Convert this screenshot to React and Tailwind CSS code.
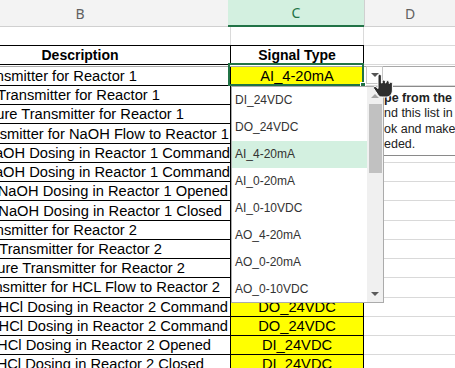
const rows = [
  { text: "Level Transmitter for Reactor 1", pr: "pr-[93px]", sig: "AI_4-20mA" },
  { text: "pH Transmitter for Reactor 1", pr: "pr-[70px]", sig: "AI_4-20mA" },
  { text: "Temperature Transmitter for Reactor 1", pr: "pr-[46px]", sig: "AI_4-20mA" },
  { text: "Flow Transmitter for NaOH Flow to Reactor 1", pr: "pr-[1px]", sig: "AI_4-20mA" },
  { text: "Valve for NaOH Dosing in Reactor 1 Command", pr: "pr-[0px]", sig: "DO_24VDC" },
  { text: "Valve for NaOH Dosing in Reactor 1 Command", pr: "pr-[0px]", sig: "DO_24VDC" },
  { text: "Valve NaOH Dosing in Reactor 1 Opened", pr: "pr-[2px]", sig: "DI_24VDC" },
  { text: "Valve NaOH Dosing in Reactor 1 Closed", pr: "pr-[8px]", sig: "DI_24VDC" },
  { text: "Level Transmitter for Reactor 2", pr: "pr-[93px]", sig: "AI_4-20mA" },
  { text: "pH Transmitter for Reactor 2", pr: "pr-[68px]", sig: "AI_4-20mA" },
  { text: "Temperature Transmitter for Reactor 2", pr: "pr-[45px]", sig: "AI_4-20mA" },
  { text: "Flow Transmitter for HCL Flow to Reactor 2", pr: "pr-[10px]", sig: "AI_4-20mA" },
  { text: "Valve for HCl Dosing in Reactor 2 Command", pr: "pr-[2px]", sig: "DO_24VDC" },
  { text: "Valve for HCl Dosing in Reactor 2 Command", pr: "pr-[2px]", sig: "DO_24VDC" },
  { text: "Valve for HCl Dosing in Reactor 2 Opened", pr: "pr-[19px]", sig: "DI_24VDC" },
  { text: "Valve for HCl Dosing in Reactor 2 Closed", pr: "pr-[26px]", sig: "DI_24VDC" },
]

const options = [
  "DI_24VDC",
  "DO_24VDC",
  "AI_4-20mA",
  "AI_0-20mA",
  "AI_0-10VDC",
  "AO_4-20mA",
  "AO_0-20mA",
  "AO_0-10VDC",
]

function DataRow({ row, first }) {
  return (
    <div className={first ? "flex h-[19px]" : "flex h-[19.24px]"}>
      <div className="w-[231px] flex items-center justify-end overflow-hidden border-r border-b border-black">
        <span className={`whitespace-nowrap ${row.pr}`}>{row.text}</span>
      </div>
      <div className="w-[133px] flex items-center justify-center bg-[#ffff00] border-r border-b border-black whitespace-nowrap">
        {row.sig}
      </div>
      <div className="flex-1 border-b border-[#d9d9d9]" />
    </div>
  )
}

export default function App() {
  return (
    <div className="relative w-[455px] h-[368px] overflow-hidden bg-white text-black text-[14.7px] font-['Liberation_Sans',Arial,sans-serif]">
      {/* column letters */}
      <div className="flex h-[27px] bg-[#f3f3f3] font-['Noto_Sans',sans-serif] text-[14px]">
        <div className="w-[228px] flex items-center border-b border-[#d0d0d0] text-[#616161]">
          <span className="w-[160px] text-center">B</span>
        </div>
        <div className="w-[136px] flex items-center justify-center bg-[#d3f0e0] border-b-2 border-[#217346] text-[#217346]">
          C
        </div>
        <div className="flex-1 flex items-center justify-center border-l border-b border-[#d0d0d0] text-[#616161]">
          D
        </div>
      </div>

      {/* empty row */}
      <div className="flex h-[18px]">
        <div className="w-[231px] border-r border-[#dadada]" />
        <div className="w-[133px] border-r border-[#dadada]" />
        <div className="flex-1" />
      </div>

      {/* table header */}
      <div className="flex h-[20px] font-bold text-[14px]">
        <div className="w-[231px] flex items-center border-y border-r border-black">
          <span className="w-[160px] text-center">Description</span>
        </div>
        <div className="w-[133px] flex items-center justify-center border-y border-r border-black">
          Signal Type
        </div>
        <div className="flex-1 border-y border-[#d9d9d9]" />
      </div>

      {/* freeze panes line */}
      <div className="h-[2px] border-b border-[#a8a8a8]" />

      {rows.map((row, i) => (
        <DataRow key={i} row={row} first={i === 0} />
      ))}

      {/* active cell */}
      <div className="absolute left-[228px] top-[63px] w-[136px] h-[23px] border-2 border-[#217346]" />
      <div className="absolute left-[360px] top-[82px] w-[6px] h-[6px] bg-[#217346] border border-white" />

      {/* input message */}
      <div className="absolute left-[300px] top-[86px] w-[220px] h-[70px] bg-white border border-[#8a8a8a] text-[12.5px] leading-[15.3px] text-[#222] pt-[4px]">
        <div className="whitespace-nowrap pl-[83px] font-bold">pe from the list</div>
        <div className="whitespace-nowrap pl-[83px]">nd this list in 'Lists'</div>
        <div className="whitespace-nowrap pl-[83px]">ok and make changes</div>
        <div className="whitespace-nowrap pl-[83px]">eded.</div>
      </div>

      {/* dropdown button */}
      <div className="absolute left-[366px] top-[66px] w-[17px] h-[18px] bg-white border border-[#c6c6c6] flex items-center justify-center">
        <svg width="8" height="4" viewBox="0 0 8 4">
          <path d="M0 0h8L4 4z" fill="#555" />
        </svg>
      </div>

      {/* dropdown list */}
      <div className="absolute left-[231px] top-[86px] w-[153px] h-[217px] bg-white border border-[#ababab] flex text-[12px] text-[#333]">
        <div className="flex-1 flex flex-col">
          {options.map((o) => (
            <div
              key={o}
              className={
                o === "AI_4-20mA"
                  ? "h-[27.2px] flex items-center pl-[3px] bg-[#d3f0e0]"
                  : "h-[27.2px] flex items-center pl-[3px]"
              }
            >
              {o}
            </div>
          ))}
        </div>
        <div className="w-[16px] bg-[#f0f0f0] flex flex-col items-center">
          <div className="h-[17px] flex items-center justify-center">
            <svg width="8" height="4" viewBox="0 0 8 4">
              <path d="M4 0l4 4H0z" fill="#a3a3a3" />
            </svg>
          </div>
          <div className="w-[13px] h-[69px] bg-[#c1c1c1]" />
          <div className="flex-1" />
          <div className="h-[17px] flex items-center justify-center">
            <svg width="8" height="4" viewBox="0 0 8 4">
              <path d="M0 0h8L4 4z" fill="#5a5a5a" />
            </svg>
          </div>
        </div>
      </div>

      {/* hand cursor */}
      <svg
        className="absolute left-[372px] top-[73px]"
        width="22"
        height="26"
        viewBox="0 0 22 26"
      >
        <path
          d="M6 3a1.7 1.7 0 0 1 3.4 0v7h.8V8.6a1.6 1.6 0 0 1 3.2 0V10h.6V9.2a1.6 1.6 0 0 1 3.2 0v1.3h.2a1.5 1.5 0 0 1 3 .2V17c0 3.4-2.2 7-5.6 7H10c-2 0-3.2-1-4.3-2.6L1.8 15.6c-.9-1.4.9-2.9 2.2-1.8L6 15.6z"
          fill="#2e2e2e"
          stroke="#ffffff"
          strokeWidth="1"
        />
      </svg>
    </div>
  )
}
